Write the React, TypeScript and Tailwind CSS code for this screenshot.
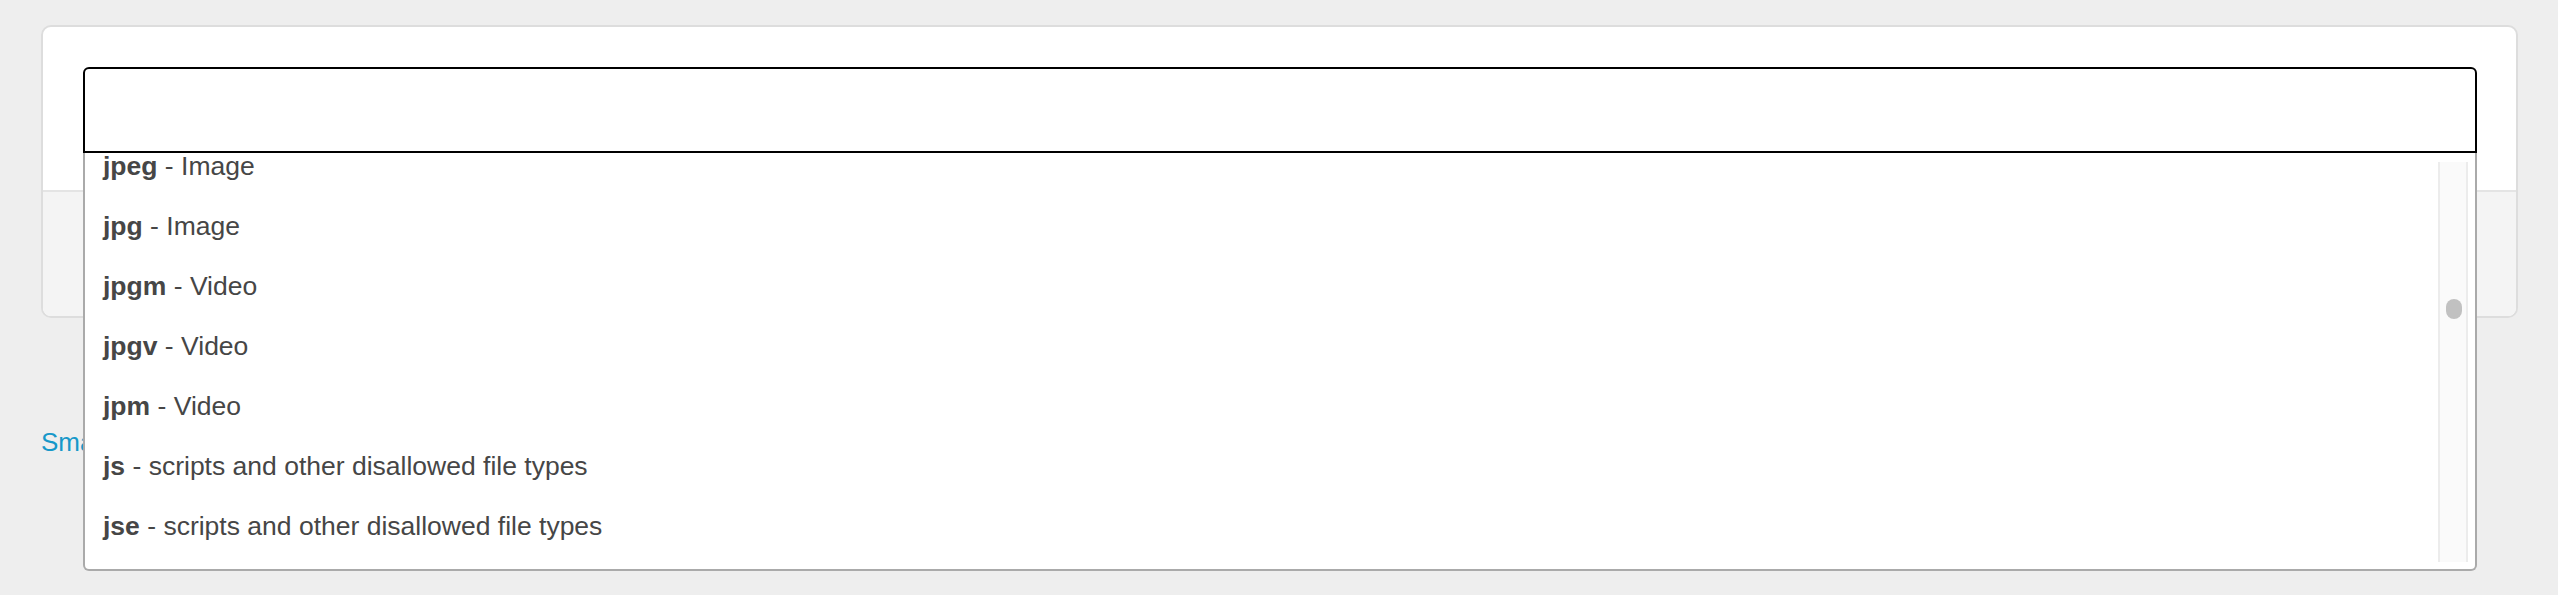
import React from "react";

const items = [
  { ext: "jpeg", label: "Image" },
  { ext: "jpg", label: "Image" },
  { ext: "jpgm", label: "Video" },
  { ext: "jpgv", label: "Video" },
  { ext: "jpm", label: "Video" },
  { ext: "js", label: "scripts and other disallowed file types" },
  { ext: "jse", label: "scripts and other disallowed file types" },
];

export default function App() {
  return (
    <div
      className="min-h-screen bg-[#eeeeee] pl-[41px] pr-[40px] pt-[25px]"
      style={{ fontFamily: '"Liberation Sans", Arial, sans-serif' }}
    >
      <div className="rounded-[10px] border-2 border-[#dddddd] bg-white">
        <div className="pl-[40px] pr-[39px] pt-[40px] pb-[37px]">
          <div className="relative">
            <div className="h-[86px] rounded-t-[6px] border-2 border-black bg-white" />

            {/* open dropdown list */}
            <div className="absolute left-0 right-0 top-full z-10 h-[418px] overflow-hidden rounded-b-[6px] border-x-2 border-b-2 border-[#aaaaaa] bg-white">
              <ul className="-mt-[16px]">
                {items.map((item) => (
                  <li
                    key={item.ext}
                    className="flex h-[60px] items-center pl-[18px] text-[26.5px] text-[#464646]"
                  >
                    <span className="font-bold">{item.ext}</span>
                    <span>&nbsp;- {item.label}</span>
                  </li>
                ))}
              </ul>
              <div className="absolute right-[7px] top-[9px] bottom-[7px] w-[30px] border-x-2 border-[#ececec] bg-[#fafafa]">
                <div className="absolute left-[6px] top-[137px] h-[20px] w-[16px] rounded-full bg-[#c1c1c1]" />
              </div>
            </div>
          </div>
        </div>
        <div className="h-[126px] rounded-b-[8px] border-t-2 border-[#e4e4e4] bg-[#f4f4f4]" />
      </div>

      <a className="mt-[106px] block text-[26px] leading-[36px] text-[#1798c9]" href="#">
        Small print: allowed file types
      </a>
    </div>
  );
}
